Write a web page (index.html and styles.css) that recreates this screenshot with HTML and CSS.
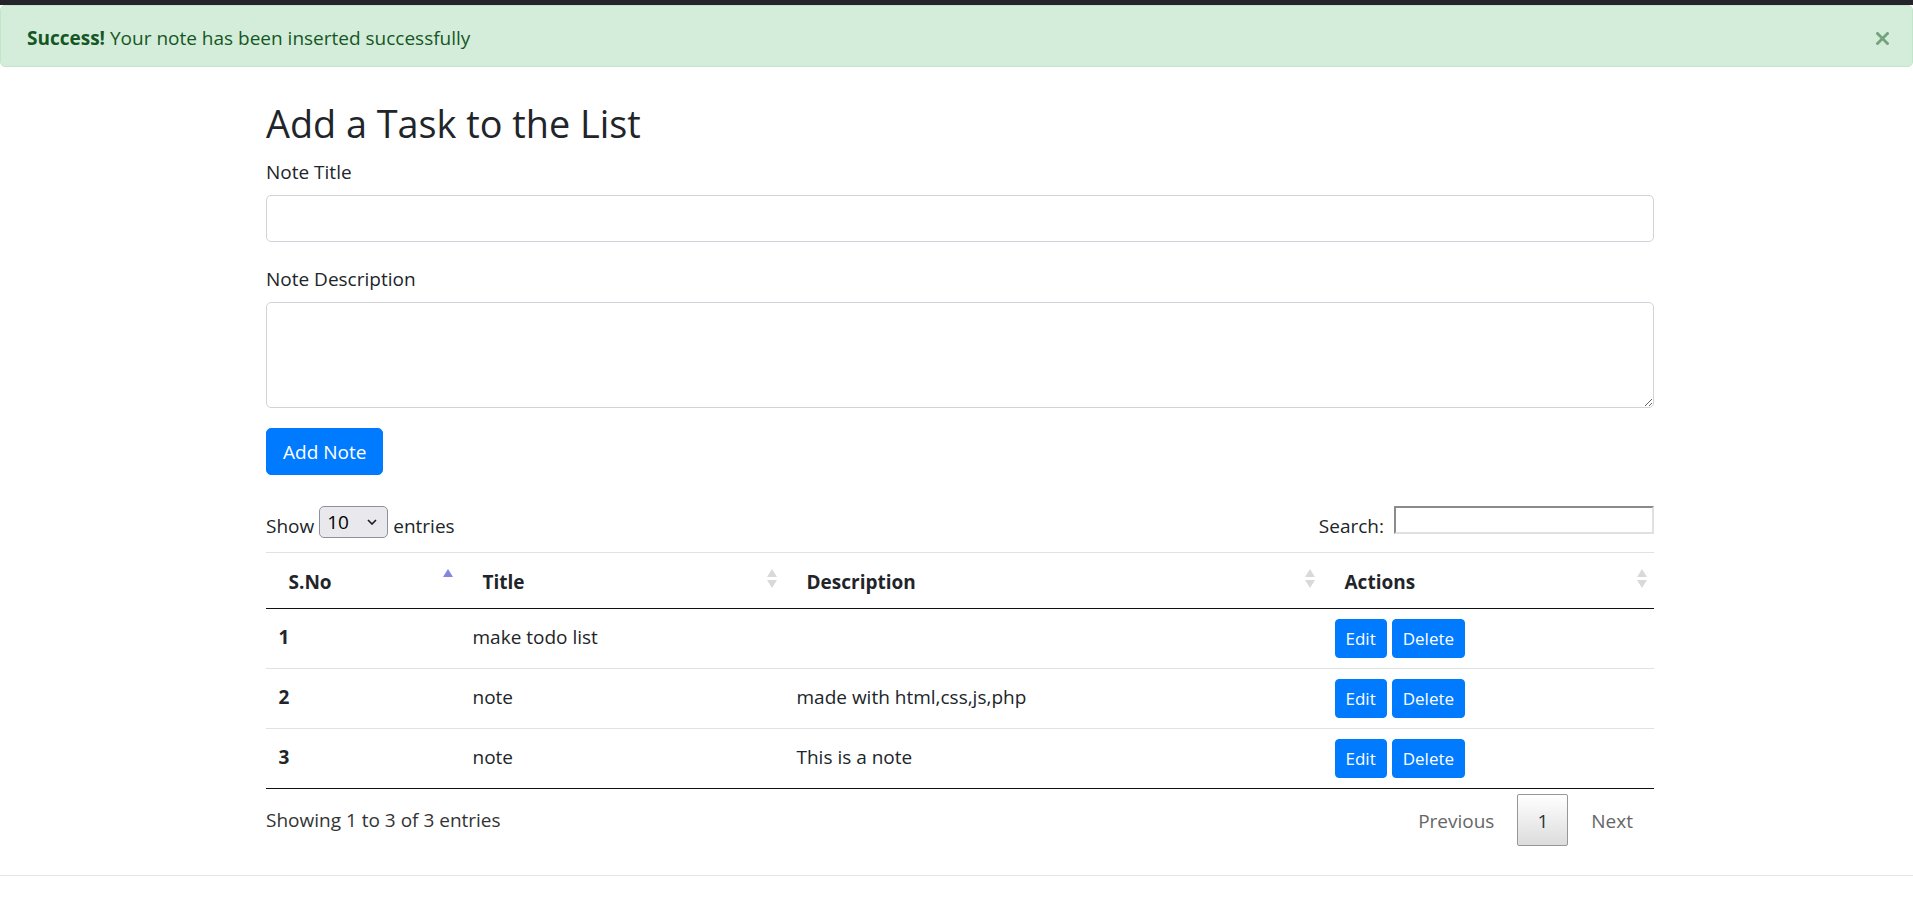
FILE: index.html
```html
<!DOCTYPE html>
<html lang="en">
<head>
<meta charset="utf-8">
<title>iNotes</title>
<link rel="stylesheet" href="styles.css">
</head>
<body>
<div class="topbar"></div>
<div class="alert">
  <strong>Success!</strong> Your note has been inserted successfully
  <button class="close" type="button" aria-label="Close">
    <svg width="13" height="13" viewBox="0 0 13 13"><path d="M1.5 1.5 L11.5 11.5 M11.5 1.5 L1.5 11.5" stroke="#74a27e" stroke-width="2.8" stroke-linecap="square"/></svg>
  </button>
</div>

<div class="container">
  <h2 class="title">Add a Task to the List</h2>
  <form class="note-form">
    <div class="form-group">
      <label for="title">Note Title</label>
      <input id="title" class="form-control" type="text">
    </div>
    <div class="form-group">
      <label for="desc">Note Description</label>
      <textarea id="desc" class="form-control area"></textarea>
    </div>
    <button type="button" class="btn btn-primary">Add Note</button>
  </form>

  <div class="dt-wrapper">
    <div class="dt-top">
      <div class="dt-length">
        <span class="dt-label">Show</span>
        <span class="select">10
          <svg width="10" height="6" viewBox="0 0 10 6"><path d="M1 1 L5 5 L9 1" fill="none" stroke="#1a1a1a" stroke-width="1.6"/></svg>
        </span>
        <span class="dt-label">entries</span>
      </div>
      <div class="dt-filter"><span class="dt-label">Search:</span><span class="search-input"></span></div>
    </div>

    <table class="dt-table">
      <colgroup>
        <col class="c1"><col class="c2"><col class="c3"><col class="c4">
      </colgroup>
      <thead>
        <tr>
          <th>S.No<span class="sort"><svg width="10" height="19" viewBox="0 0 10 19"><path d="M5 0 L10 8 L0 8Z" fill="#8585e0"/></svg></span></th>
          <th>Title<span class="sort"><svg width="10" height="19" viewBox="0 0 10 19"><path d="M5 0 L10 8 L0 8Z M0 11 L10 11 L5 19Z" fill="#d9d9d9"/></svg></span></th>
          <th>Description<span class="sort"><svg width="10" height="19" viewBox="0 0 10 19"><path d="M5 0 L10 8 L0 8Z M0 11 L10 11 L5 19Z" fill="#d9d9d9"/></svg></span></th>
          <th>Actions<span class="sort"><svg width="10" height="19" viewBox="0 0 10 19"><path d="M5 0 L10 8 L0 8Z M0 11 L10 11 L5 19Z" fill="#d9d9d9"/></svg></span></th>
        </tr>
      </thead>
      <tbody>
        <tr>
          <th class="rowhead">1</th>
          <td>make todo list</td>
          <td></td>
          <td class="act"><div class="actions"><button class="btn-sm">Edit</button><button class="btn-sm">Delete</button></div></td>
        </tr>
        <tr>
          <th class="rowhead">2</th>
          <td>note</td>
          <td>made with html,css,js,php</td>
          <td class="act"><div class="actions"><button class="btn-sm">Edit</button><button class="btn-sm">Delete</button></div></td>
        </tr>
        <tr>
          <th class="rowhead">3</th>
          <td>note</td>
          <td>This is a note</td>
          <td class="act"><div class="actions"><button class="btn-sm">Edit</button><button class="btn-sm">Delete</button></div></td>
        </tr>
      </tbody>
    </table>

    <div class="dt-bottom">
      <div class="dt-info">Showing 1 to 3 of 3 entries</div>
      <div class="dt-paginate">
        <span class="page disabled">Previous</span>
        <span class="page current">1</span>
        <span class="page disabled">Next</span>
      </div>
    </div>
  </div>
</div>
<hr class="footer-line">
</body>
</html>
```

FILE: styles.css
```css
* { box-sizing: border-box; }

html, body {
  margin: 0;
  padding: 0;
  background: #fff;
}

body {
  font-family: "Open Sans", "Noto Sans", sans-serif;
  font-size: 19px;
  line-height: 30px;
  color: #212529;
}

.topbar {
  height: 5px;
  background: #25242b;
}

.alert {
  position: relative;
  height: 62px;
  padding: 17px 64px 13px 26px;
  background: #d4edda;
  border: 1px solid #c3e6cb;
  border-radius: 5px;
  color: #155724;
}

.alert strong { font-weight: 700; }

.close {
  position: absolute;
  top: 0;
  right: 0;
  height: 60px;
  padding: 4px 23px 0 25px;
  border: 0;
  background: transparent;
  display: flex;
  align-items: center;
}

.container {
  max-width: 1395px;
  margin: 33px auto 0;
  padding-left: 7px;
}

.title {
  margin: 0 0 9px;
  font-size: 37.8px;
  line-height: 48px;
  font-weight: 400;
  color: #212529;
}

.form-group { margin-bottom: 22px; }
.form-group + .form-group { margin-bottom: 20px; }

label {
  display: block;
  margin-bottom: 8px;
}

.form-control {
  display: block;
  width: 100%;
  height: 47px;
  border: 1px solid #ced4da;
  border-radius: 5px;
  background: #fff;
  font: inherit;
  padding: 7px 15px;
}

.area {
  height: 106px;
  resize: vertical;
}

.btn {
  font: inherit;
  border: 1px solid transparent;
  border-radius: 5px;
  height: 47px;
  padding: 1px 16px 0;
  line-height: 30px;
}

.btn-primary {
  background: #007bff;
  border-color: #007bff;
  color: #fff;
}

.dt-wrapper { margin-top: 31px; }

.dt-top {
  display: flex;
  justify-content: space-between;
  align-items: center;
  height: 32px;
  margin-bottom: 14px;
}

.dt-length {
  display: flex;
  align-items: center;
  gap: 5px;
}

.dt-label {
  display: block;
  padding-top: 7px;
}

.select {
  display: inline-flex;
  align-items: center;
  justify-content: space-between;
  width: 69px;
  height: 32px;
  padding: 0 10px 0 7px;
  background: #e9e9ed;
  border: 1px solid #8f8f9d;
  border-radius: 5px;
  color: #000;
}

.dt-filter {
  display: flex;
  align-items: center;
  gap: 10px;
  height: 32px;
}

.search-input {
  display: block;
  width: 260px;
  height: 28px;
  margin-bottom: 4px;
  border-style: solid;
  border-width: 2px;
  border-color: #8b8b8b #e0e0e0 #e0e0e0 #8b8b8b;
  background: #fff;
}

.dt-table {
  width: 100%;
  table-layout: fixed;
  border-collapse: collapse;
  border-bottom: 1px solid #111;
}

.c1 { width: 194px; }
.c2 { width: 324px; }
.c3 { width: 538px; }

.dt-table thead th {
  position: relative;
  text-align: left;
  font-weight: 700;
  padding: 14px 22px 10.5px 22.5px;
  border-top: 1px solid #dee2e6;
  border-bottom: 1px solid #111;
}

.sort {
  position: absolute;
  right: 7px;
  top: 50%;
  margin-top: -11px;
  width: 10px;
  height: 19px;
  display: flex;
}

.dt-table tbody td,
.dt-table tbody th {
  padding: 13px 12.5px 7px;
  vertical-align: top;
  text-align: left;
  border-top: 1px solid #dee2e6;
}

.dt-table tbody td.act {
  padding: 10px 12.5px;
}

.dt-table tbody tr:first-child td,
.dt-table tbody tr:first-child th { border-top: 0; }

.rowhead { font-weight: 700; }

.actions {
  display: flex;
  gap: 5px;
}

.btn-sm {
  font-family: inherit;
  font-size: 17px;
  line-height: 27px;
  padding: 5px 10px;
  color: #fff;
  background: #007bff;
  border: 1px solid #007bff;
  border-radius: 4px;
}

.dt-bottom {
  display: flex;
  justify-content: space-between;
  align-items: flex-start;
}

.dt-info {
  padding-top: 16px;
  color: #333;
}

.dt-paginate {
  padding-top: 5px;
  display: flex;
  gap: 2px;
}

.page {
  display: inline-block;
  min-width: 30px;
  padding: 11px 20px 9px;
  border: 1px solid transparent;
  border-radius: 2px;
  text-align: center;
  color: #666;
}

.page.current {
  padding: 11px 19px 9px;
  color: #333;
  border-color: #979797;
  background: linear-gradient(to bottom, #fff 0%, #dcdcdc 100%);
}

.footer-line {
  margin: 29px 0 0;
  border: 0;
  border-top: 1px solid #e5e5e5;
}
```
